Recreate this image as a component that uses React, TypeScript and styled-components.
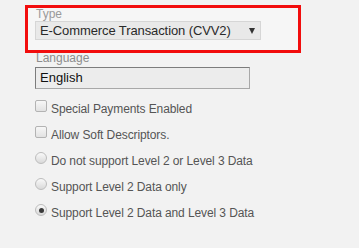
import React from "react";
import styled, { createGlobalStyle } from "styled-components";

const GlobalStyle = createGlobalStyle`
  html, body {
    margin: 0;
    padding: 0;
    background: #f2f2f2;
    font-family: "Liberation Sans", Arial, sans-serif;
  }
`;

const options = [
  { type: "checkbox", label: "Special Payments Enabled", checked: false },
  { type: "checkbox", label: "Allow Soft Descriptors.", checked: false },
  { type: "radio", label: "Do not support Level 2 or Level 3 Data", checked: false },
  { type: "radio", label: "Support Level 2 Data only", checked: false },
  { type: "radio", label: "Support Level 2 Data and Level 3 Data", checked: true },
];

const App: React.FC = () => {
  return (
    <>
      <GlobalStyle />
      <Page>
        <Highlight>
          <FieldLabel $tone="#9a9a9a">Type</FieldLabel>
          <SelectBox>
            <SelectText>E-Commerce Transaction (CVV2)</SelectText>
            <Arrow />
          </SelectBox>
        </Highlight>

        <Field>
          <FieldLabel $tone="#8c8c8c" $tight>Language</FieldLabel>
          <TextBox>English</TextBox>
        </Field>

        <OptionList>
          {options.map((opt) => (
            <OptionRow key={opt.label}>
              {opt.type === "checkbox" ? (
                <CheckBox />
              ) : (
                <Radio $checked={opt.checked} />
              )}
              <OptionLabel>{opt.label}</OptionLabel>
            </OptionRow>
          ))}
        </OptionList>
      </Page>
    </>
  );
};

export default App;

const Page = styled.div`
  width: 359px;
  height: 248px;
  padding-top: 5px;
  box-sizing: border-box;
  display: flex;
  flex-direction: column;
`;

const Highlight = styled.div`
  margin-left: 25px;
  width: 276px;
  height: 48px;
  box-sizing: border-box;
  border: 3px solid #f20d0d;
  background: #f6f6f6;
  padding: 0 0 10px 7px;
  display: flex;
  flex-direction: column;
  gap: 1px;
`;

const Field = styled.div`
  margin-left: 35px;
  display: flex;
  flex-direction: column;
  gap: 3px;
`;

const FieldLabel = styled.div<{ $tone: string; $tight?: boolean }>`
  font-size: 12px;
  line-height: ${(p) => (p.$tight ? "11px" : "12px")};
  height: ${(p) => (p.$tight ? "11px" : "12px")};
  color: ${(p) => p.$tone};
  padding-left: 1px;
`;

const SelectBox = styled.div`
  width: 226px;
  height: 19px;
  box-sizing: border-box;
  border: 1px solid #d6d6d6;
  background: #e9e9e9;
  display: flex;
  align-items: center;
  justify-content: space-between;
  padding: 0 5px 0 4px;
`;

const SelectText = styled.span`
  font-size: 13px;
  line-height: 17px;
  letter-spacing: -0.1px;
  color: #2a2a2a;
`;

const Arrow = styled.span`
  width: 0;
  height: 0;
  border-left: 3.5px solid transparent;
  border-right: 3.5px solid transparent;
  border-top: 6px solid #333;
  margin-top: 1px;
`;

const TextBox = styled.div`
  width: 215px;
  height: 22px;
  box-sizing: border-box;
  border: 1px solid #a8a8a8;
  border-top-color: #7c7c7c;
  border-left-color: #7c7c7c;
  background: #ececec;
  padding-left: 4px;
  font-size: 13px;
  line-height: 20px;
  color: #111;
`;

const OptionList = styled.div`
  margin: 11px 0 0 35px;
  display: flex;
  flex-direction: column;
`;

const OptionRow = styled.div`
  height: 26px;
  display: flex;
  align-items: flex-start;
  gap: 4px;
`;

const CheckBox = styled.span`
  width: 12px;
  height: 12px;
  box-sizing: border-box;
  border: 1px solid #b3b3b3;
  border-radius: 2px;
  background: linear-gradient(#f7f7f7, #e2e2e2);
  flex-shrink: 0;
`;

const Radio = styled.span<{ $checked: boolean }>`
  width: 12px;
  height: 12px;
  box-sizing: border-box;
  border: 1px solid #bdbdbd;
  border-radius: 50%;
  background: linear-gradient(#f9f9f9, #d9d9d9);
  flex-shrink: 0;
  display: flex;
  align-items: center;
  justify-content: center;

  &::after {
    content: "";
    display: ${(p) => (p.$checked ? "block" : "none")};
    width: 5px;
    height: 5px;
    border-radius: 50%;
    background: #3a3a3a;
  }
`;

const OptionLabel = styled.span`
  margin-top: 2px;
  font-size: 12px;
  line-height: 14px;
  letter-spacing: -0.1px;
  color: #555;
`;
